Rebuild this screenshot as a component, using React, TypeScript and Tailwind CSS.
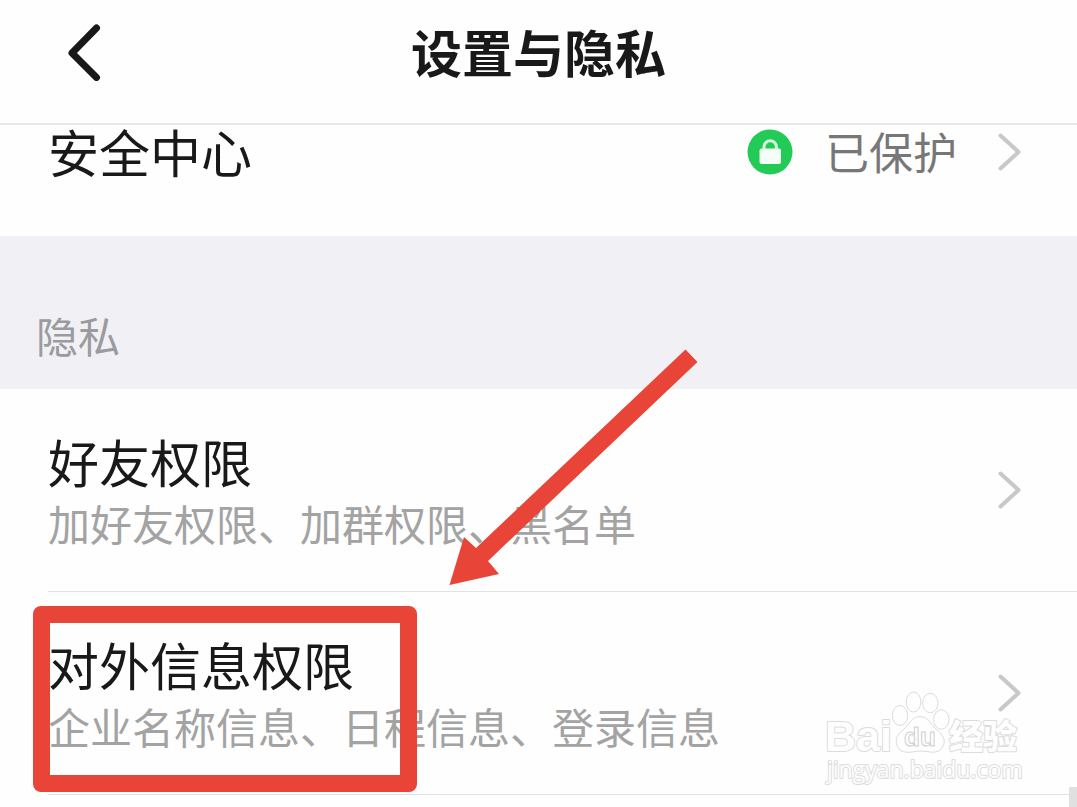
import type { ReactNode } from "react";

function Chevron() {
  return (
    <svg
      className="shrink-0"
      width="24"
      height="38"
      viewBox="0 0 24 38"
      fill="none"
      stroke="#c8c8c8"
      strokeWidth="4"
      strokeLinecap="round"
      strokeLinejoin="round"
      aria-hidden="true"
    >
      <path d="M3.5 2.5L21.5 19L3.5 35.5" />
    </svg>
  );
}

function LockBadge() {
  return (
    <svg className="shrink-0" width="46" height="46" viewBox="0 0 46 46" aria-hidden="true">
      <circle cx="23" cy="23" r="22.5" fill="#22cb55" />
      <rect x="12.5" y="19.5" width="21.5" height="15.5" rx="2" fill="#f4fdf6" />
      <path
        d="M17 21V18a6.2 6.2 0 0 1 12.4 0V21"
        fill="none"
        stroke="#d9f7e0"
        strokeWidth="3"
      />
    </svg>
  );
}

function PermissionRow({
  title,
  detail,
  children,
}: {
  title: string;
  detail: string;
  children?: ReactNode;
}) {
  return (
    <li className="relative pl-12">
      <a
        href="#"
        className="flex items-center justify-between border-b border-[#e2e2e2] py-[38px] pr-14"
      >
        <div className="whitespace-nowrap">
          <h3 className="text-[51px] leading-[68px] text-[#191919]">{title}</h3>
          <p className="text-[42px] leading-[56px] pb-0.5 text-[#a3a3a3]">{detail}</p>
        </div>
        <Chevron />
      </a>
      {children}
    </li>
  );
}

function Arrow() {
  return (
    <svg
      className="pointer-events-none absolute -top-10 left-[449px] z-10"
      width="250"
      height="238"
      viewBox="449 349 250 238"
      aria-hidden="true"
    >
      <path d="M449.5 585L464 537L476 548L685.5 349.5L697.5 362L488 561L499 574Z" fill="#e84538" />
    </svg>
  );
}

function Watermark() {
  return (
    <svg
      className="pointer-events-none absolute right-[53px] bottom-2 z-10"
      width="204"
      height="100"
      viewBox="820 687 204 100"
      fill="#fefefe"
      stroke="#dcdcdc"
      strokeWidth="1"
      strokeLinejoin="round"
    >
      <g paintOrder="stroke" strokeWidth="2">
        <text
          x="825"
          y="751"
          fontSize="43"
          fontWeight="700"
          fontFamily="Liberation Sans, sans-serif"
        >
          Bai
        </text>
        <text
          x="949"
          y="749"
          fontSize="34"
          fontWeight="900"
          fontFamily="Noto Sans CJK SC, sans-serif"
        >
          经验
        </text>
        <text x="827" y="778" fontSize="23" fontFamily="Open Sans, sans-serif">
          jingyan.baidu.com
        </text>
      </g>
      <ellipse cx="900" cy="715.5" rx="7.7" ry="10" />
      <ellipse cx="913.5" cy="702" rx="7.3" ry="10" />
      <ellipse cx="930.3" cy="703" rx="7.7" ry="9.7" />
      <ellipse cx="941.3" cy="719.5" rx="7.7" ry="9.7" />
      <path d="M920 716.5C911 717 909 725 903 730C896 735 894 742 899 749C905 755 913 751 921 751C929 751 937 755 942 748C947 741 943 735 937 730C931 725 929 717 920 716.5Z" />
      <text
        x="904"
        y="746"
        fontSize="26"
        fontWeight="700"
        stroke="#cfcfcf"
        fontFamily="Liberation Sans, sans-serif"
      >
        du
      </text>
    </svg>
  );
}

export default function App() {
  return (
    <div className="relative min-h-screen overflow-hidden bg-[#fefefe] font-['Noto_Sans_CJK_SC',sans-serif]">
      {/* Header */}
      <header className="grid grid-cols-[1fr_auto_1fr] items-center border-b-2 border-[#e6e6e6] pt-3.5 pb-[34px]">
        <button type="button" aria-label="返回" className="ml-16 w-10">
          <svg
            width="40"
            height="58"
            viewBox="0 0 40 58"
            fill="none"
            stroke="#191919"
            strokeWidth="7"
            strokeLinecap="round"
            strokeLinejoin="round"
          >
            <path d="M32.5 5L8 30L32.5 54.5" />
          </svg>
        </button>
        <h1 className="text-[51px] leading-[75px] font-bold text-[#191919]">设置与隐私</h1>
      </header>

      {/* Security */}
      <a href="#" className="flex items-center justify-between pr-14 pb-[58px] pl-12">
        <span className="text-[51px] leading-[53px] text-[#191919]">安全中心</span>
        <span className="flex items-center">
          <LockBadge />
          <span className="mr-10 ml-8 text-[44px] leading-[53px] text-[#777777]">已保护</span>
          <Chevron />
        </span>
      </a>

      {/* Privacy */}
      <section>
        <h2 className="bg-[#f0f0f5] px-9 pt-[71px] pb-[26px] text-[42px] leading-[56px] text-[#9b9b9f]">
          隐私
        </h2>
        <ul>
          <PermissionRow title="好友权限" detail="加好友权限、加群权限、黑名单">
            <Arrow />
          </PermissionRow>
          <PermissionRow title="对外信息权限" detail="企业名称信息、日程信息、登录信息">
            <div className="pointer-events-none absolute top-3.5 left-[33px] z-10 h-[186px] w-[384px] rounded-lg border-[17px] border-[#e84538]" />
            <Watermark />
          </PermissionRow>
        </ul>
      </section>

      <div className="absolute right-0 bottom-0 h-5 w-2 bg-[#e0e0e0]" />
    </div>
  );
}
